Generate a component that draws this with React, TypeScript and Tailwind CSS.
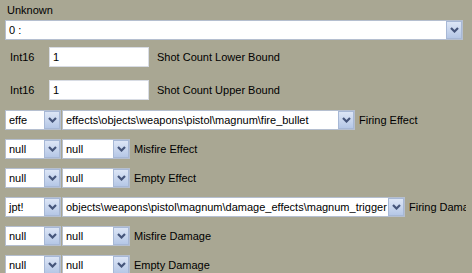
import type { ReactNode } from 'react';

// chevron used on every dropdown button
function Chevron() {
  return (
    <svg width="9" height="6" viewBox="0 0 9 6" className="block">
      <path d="M1 1 L4.5 4.5 L8 1" fill="none" stroke="#45557a" strokeWidth="2.2" />
    </svg>
  );
}

function DropButton() {
  return (
    <div className="flex h-full w-[16px] shrink-0 items-center justify-center border border-[#a7b8d6] bg-gradient-to-b from-[#dde6f6] to-[#b5c7e6]">
      <Chevron />
    </div>
  );
}

function Combo({ value, width }: { value: string; width: string }) {
  return (
    <div className={`flex h-[20px] shrink-0 items-stretch border border-[#b5bfd0] bg-white ${width}`}>
      <div className="flex flex-1 items-center overflow-hidden whitespace-nowrap pl-[3px] text-black">{value}</div>
      <DropButton />
    </div>
  );
}

function Label({ children }: { children: ReactNode }) {
  return <span className="whitespace-nowrap text-black">{children}</span>;
}

function IntRow({ label, className }: { label: string; className: string }) {
  return (
    <div className={`flex h-[20px] items-center ${className}`}>
      <span className="w-[49px] pl-[10px] text-black">Int16</span>
      <div className="flex h-[20px] w-[100px] items-center border border-[#d8dce4] bg-white pl-[3px] text-black">1</div>
      <span className="ml-[8px] text-black">{label}</span>
    </div>
  );
}

const refRows = [
  { a: 'effe', b: 'effects\\objects\\weapons\\pistol\\magnum\\fire_bullet', bw: 'w-[293px]', label: 'Firing Effect' },
  { a: 'null', b: 'null', bw: 'w-[68px]', label: 'Misfire Effect' },
  { a: 'null', b: 'null', bw: 'w-[68px]', label: 'Empty Effect' },
  { a: 'jpt!', b: 'objects\\weapons\\pistol\\magnum\\damage_effects\\magnum_trigger', bw: 'w-[343px]', label: 'Firing Damage' },
  { a: 'null', b: 'null', bw: 'w-[68px]', label: 'Misfire Damage' },
  { a: 'null', b: 'null', bw: 'w-[68px]', label: 'Empty Damage' },
];

export default function App() {
  return (
    <div className="h-[273px] w-[472px] overflow-hidden bg-[#a9a793] text-[11px] leading-[13px] font-['Liberation_Sans',Arial,sans-serif]">
      <div className="w-[466px] overflow-hidden">
        <div className="pl-[7px] pt-[4px] h-[20px] text-black">Unknown</div>
        <div className="pl-[5px]">
          <Combo value="0 :" width="w-[458px]" />
        </div>
        <IntRow label="Shot Count Lower Bound" className="mt-[7px]" />
        <IntRow label="Shot Count Upper Bound" className="mt-[13px]" />
        <div className="mt-[10px] flex flex-col gap-[9px] pl-[5px]">
          {refRows.map((r, i) => (
            <div key={i} className="flex items-center">
              <Combo value={r.a} width="w-[56px]" />
              <div className="ml-[1px]">
                <Combo value={r.b} width={r.bw} />
              </div>
              <span className="ml-[4px]">
                <Label>{r.label}</Label>
              </span>
            </div>
          ))}
        </div>
      </div>
    </div>
  );
}
